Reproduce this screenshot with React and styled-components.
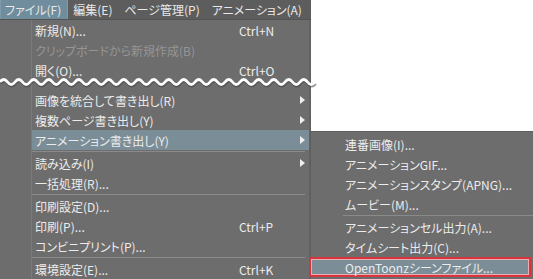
import styled, { createGlobalStyle } from 'styled-components'

const GlobalStyle = createGlobalStyle`
  html, body {
    margin: 0;
    padding: 0;
    background: #ffffff;
  }
  body {
    font-family: "Noto Sans CJK JP", "Noto Sans", sans-serif;
    font-feature-settings: "palt";
  }
`

const Screen = styled.div`
  width: 533px;
  height: 279px;
  display: flex;
  overflow: hidden;
  background: #ffffff;
`

const LeftCol = styled.div`
  width: 311px;
  flex: none;
  display: flex;
  flex-direction: column;
`

const MenuBar = styled.div`
  height: 21px;
  display: flex;
  align-items: center;
  background: #5d5d5d;
  border-bottom: 1px solid #535353;
  white-space: nowrap;
  overflow: hidden;
`

const BarItem = styled.div`
  height: 19px;
  flex: none;
  display: flex;
  align-items: center;
  padding: 0 6px 0 4px;
  font-size: 12px;
  color: #e9e9e9;
  background: ${p => (p.$active ? '#6f8d9c' : 'transparent')};
  border: 1px solid ${p => (p.$active ? '#7f9aa8' : 'transparent')};
`

const Menu = styled.div`
  flex: 1;
  background:
    linear-gradient(to right, transparent 31px, #7b7b7b 31px, #7b7b7b 32px, transparent 32px),
    #6d6d6d;
  border-right: 2px solid #626262;
`

const Item = styled.div`
  height: 20px;
  margin-left: 32px;
  padding-left: 3px;
  display: grid;
  grid-template-columns: 1fr 56px 14px;
  align-items: center;
  font-size: 12px;
  color: ${p => (p.$disabled ? '#959595' : '#ececec')};
  background: ${p => (p.$active ? '#7b8e98' : 'transparent')};
  white-space: nowrap;
`

const Shortcut = styled.span`
  font-size: 12px;
`

const Arrow = styled.span`
  width: 0;
  height: 0;
  border-top: 4px solid transparent;
  border-bottom: 4px solid transparent;
  border-left: 5px solid #efefef;
  justify-self: start;
  margin-left: 5px;
`

const Separator = styled.div`
  height: 3px;
  margin-left: ${p => p.$inset || 32}px;
  display: flex;
  align-items: center;
  &::after {
    content: '';
    flex: 1;
    height: 1px;
    background: #8a8a8a;
    margin-right: ${p => p.$right ?? 4}px;
  }
`

const CutRow = styled.div`
  height: 10px;
  position: relative;
`

const WaveSvg = styled.svg`
  position: absolute;
  left: 0;
  top: -5px;
  overflow: visible;
`

const RightCol = styled.div`
  flex: 1;
  display: flex;
  flex-direction: column;
  padding-top: 131px;
  margin-left: -1px;
`

const SubMenu = styled.div`
  flex: 1;
  padding-top: 2px;
  background: #6d6d6d;
  border-top: 1px solid #5e5e5e;
  border-left: 1px solid #5e5e5e;
`

const SubItem = styled.div`
  height: 20px;
  display: flex;
  align-items: center;
  margin: 0 2px 0 -2px;
  padding-left: 34px;
  font-size: 12px;
  color: #ececec;
  white-space: nowrap;
  box-sizing: border-box;
  background: ${p => (p.$outlined ? '#7b8e98' : 'transparent')};
  border: 2px solid ${p => (p.$outlined ? '#d7343e' : 'transparent')};
  box-shadow: ${p => (p.$outlined ? 'inset 0 0 0 1px #e8b0b4' : 'none')};
`

function Wave() {
  const period = 15
  let d = 'M0 7 Q3.75 2 7.5 7'
  for (let x = 15; x <= 317; x += period / 2) d += ` T${x} 7`
  return (
    <WaveSvg width="320" height="14" viewBox="0 0 320 14">
      <path d={d} transform="translate(0.5 1.6)" fill="none" stroke="#4a4a4a" strokeOpacity="0.6" strokeWidth="2.8" />
      <path d={d} fill="none" stroke="#ffffff" strokeWidth="2.8" />
    </WaveSvg>
  )
}

const topItems = [
  { label: '新規(N)...', key: 'Ctrl+N' },
  { label: 'クリップボードから新規作成(B)', disabled: true },
  { label: '開く(O)...', key: 'Ctrl+O' },
]

export default function App() {
  return (
    <Screen>
      <GlobalStyle />
      <LeftCol>
        <MenuBar>
          <BarItem $active>ファイル(F)</BarItem>
          <BarItem>編集(E)</BarItem>
          <BarItem>ページ管理(P)</BarItem>
          <BarItem>アニメーション(A)</BarItem>
          <BarItem>レイヤー(L)</BarItem>
        </MenuBar>
        <Menu>
          {topItems.map(it => (
            <Item key={it.label} $disabled={it.disabled}>
              <span>{it.label}</span>
              <Shortcut>{it.key}</Shortcut>
              <span />
            </Item>
          ))}
          <CutRow><Wave /></CutRow>
          <Item><span>画像を統合して書き出し(R)</span><span /><Arrow /></Item>
          <Item><span>複数ページ書き出し(Y)</span><span /><Arrow /></Item>
          <Item $active><span>アニメーション書き出し(Y)</span><span /><Arrow /></Item>
          <Separator />
          <Item><span>読み込み(I)</span><span /><Arrow /></Item>
          <Item><span>一括処理(R)...</span><span /><span /></Item>
          <Separator />
          <Item><span>印刷設定(D)...</span><span /><span /></Item>
          <Item><span>印刷(P)...</span><Shortcut>Ctrl+P</Shortcut><span /></Item>
          <Item><span>コンビニプリント(P)...</span><span /><span /></Item>
          <Separator />
          <Item><span>環境設定(E)...</span><Shortcut>Ctrl+K</Shortcut><span /></Item>
        </Menu>
      </LeftCol>
      <RightCol>
        <SubMenu>
          <SubItem>連番画像(I)...</SubItem>
          <SubItem>アニメーションGIF...</SubItem>
          <SubItem>アニメーションスタンプ(APNG)...</SubItem>
          <SubItem>ムービー(M)...</SubItem>
          <Separator $inset={32} $right={0} />
          <SubItem>アニメーションセル出力(A)...</SubItem>
          <SubItem>タイムシート出力(C)...</SubItem>
          <SubItem $outlined>OpenToonzシーンファイル...</SubItem>
        </SubMenu>
      </RightCol>
    </Screen>
  )
}
